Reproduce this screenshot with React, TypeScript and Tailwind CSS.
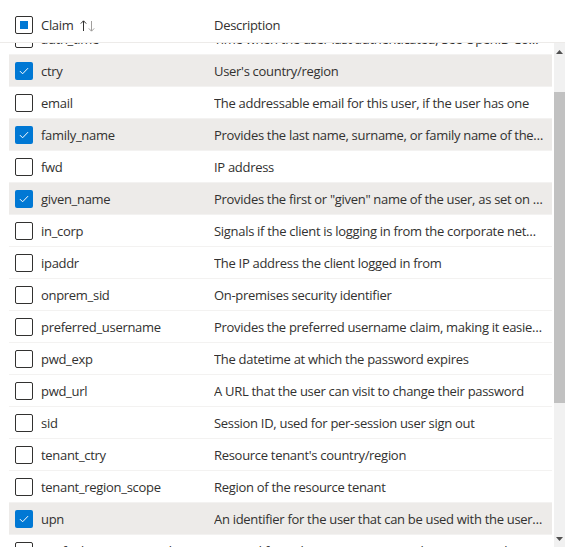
import React from "react";

type Row = { claim: string; desc: string; checked: boolean };

const rows: Row[] = [
  { claim: "auth_time", desc: "Time when the user last authenticated; See OpenID Connect spec", checked: false },
  { claim: "ctry", desc: "User's country/region", checked: true },
  { claim: "email", desc: "The addressable email for this user, if the user has one", checked: false },
  { claim: "family_name", desc: "Provides the last name, surname, or family name of the user as defined in the user object", checked: true },
  { claim: "fwd", desc: "IP address", checked: false },
  { claim: "given_name", desc: "Provides the first or \"given\" name of the user, as set on the user object", checked: true },
  { claim: "in_corp", desc: "Signals if the client is logging in from the corporate network", checked: false },
  { claim: "ipaddr", desc: "The IP address the client logged in from", checked: false },
  { claim: "onprem_sid", desc: "On-premises security identifier", checked: false },
  { claim: "preferred_username", desc: "Provides the preferred username claim, making it easier for apps", checked: false },
  { claim: "pwd_exp", desc: "The datetime at which the password expires", checked: false },
  { claim: "pwd_url", desc: "A URL that the user can visit to change their password", checked: false },
  { claim: "sid", desc: "Session ID, used for per-session user sign out", checked: false },
  { claim: "tenant_ctry", desc: "Resource tenant's country/region", checked: false },
  { claim: "tenant_region_scope", desc: "Region of the resource tenant", checked: false },
  { claim: "upn", desc: "An identifier for the user that can be used with the username_hint parameter", checked: true },
  { claim: "verified_primary_email", desc: "Sourced from the user's PrimaryAuthoritativeEmail", checked: false },
];

function Check({ checked, indeterminate }: { checked?: boolean; indeterminate?: boolean }) {
  if (checked) {
    return (
      <div className="w-[18px] h-[18px] rounded-[2px] bg-[#0078d4] flex items-center justify-center shrink-0">
        <svg width="12" height="12" viewBox="0 0 12 12" fill="none">
          <path d="M2.2 6.4 L4.6 8.8 L9.8 3.4" stroke="#ffffff" strokeWidth="1" strokeLinecap="round" strokeLinejoin="round" />
        </svg>
      </div>
    );
  }
  return (
    <div className="w-[18px] h-[18px] rounded-[2px] border border-[#323130] bg-white flex items-center justify-center shrink-0">
      {indeterminate && <div className="w-[8px] h-[8px] bg-[#0078d4]" />}
    </div>
  );
}

export default function App() {
  return (
    <div
      className="w-[565px] h-[547px] bg-white overflow-hidden flex flex-col text-[13px] tracking-[-0.3px] text-[#323130]"
      style={{ fontFamily: '"Segoe UI", "Open Sans", "Noto Sans", sans-serif' }}
    >
      <div className="h-[43px] shrink-0 flex items-center pt-[8px] pl-[15px] border-b border-[#edebe9] relative z-10 bg-white">
        <Check indeterminate />
        <div className="w-[173px] pl-[8px] pt-[2px] flex items-center gap-[4px]">
          <span>Claim</span>
          <svg width="16" height="14" viewBox="0 0 16 14" className="ml-[2px]">
            <path d="M3.5 12 V2 M0.8 4.6 L3.5 1.8 L6.2 4.6" stroke="#323130" strokeWidth="1" fill="none" />
            <path d="M11.5 2 V12 M8.8 9.4 L11.5 12.2 L14.2 9.4" stroke="#a19f9d" strokeWidth="1" fill="none" />
          </svg>
        </div>
        <span className="ml-[8px] pt-[2px]">Description</span>
      </div>
      <div className="flex-1 flex min-h-0">
        <div className="flex-1 overflow-hidden pl-[9px]">
          <div className="mt-[-20px] w-[543px]">
            {rows.map((r) => (
              <div
                key={r.claim}
                className={`h-[32px] flex items-center pl-[6px] border-b border-[#f3f2f1] ${r.checked ? "bg-[#edebe9]" : "bg-white"}`}
              >
                <Check checked={r.checked} />
                <div className="w-[181px] pl-[8px] pt-[2px] truncate">{r.claim}</div>
                <div className="w-[331px] pt-[2px] truncate">{r.desc}</div>
              </div>
            ))}
          </div>
        </div>
        <div className="w-[13px] shrink-0 flex pl-[2px]">
          <div className="w-[11px] bg-[#f1f1f1] flex flex-col items-center">
            <div className="h-[17px] w-full flex items-center justify-center shrink-0">
              <svg width="7" height="4" viewBox="0 0 7 4"><path d="M0 4 L3.5 0 L7 4 Z" fill="#505050" /></svg>
            </div>
            <div className="h-[32px] shrink-0" />
            <div className="w-full h-[311px] bg-[#c1c1c1] shrink-0" />
            <div className="flex-1" />
            <div className="h-[17px] w-full flex items-center justify-center shrink-0">
              <svg width="7" height="4" viewBox="0 0 7 4"><path d="M0 0 L3.5 4 L7 0 Z" fill="#505050" /></svg>
            </div>
          </div>
        </div>
      </div>
    </div>
  );
}
